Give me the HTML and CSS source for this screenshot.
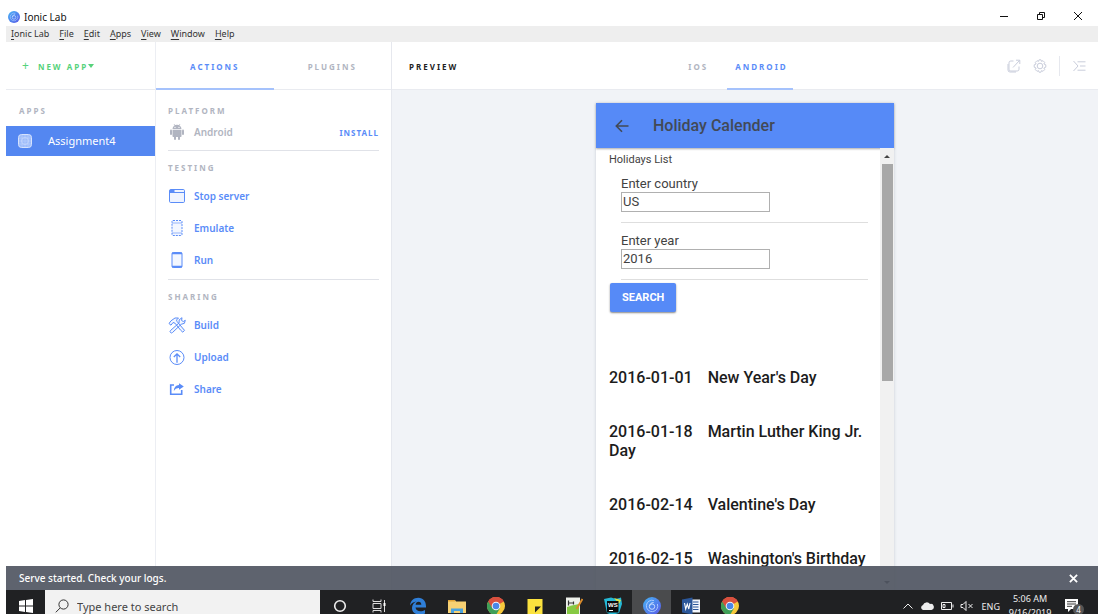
FILE: index.html
```html
<!DOCTYPE html>
<html lang="en">
<head>
<meta charset="utf-8">
<title>Ionic Lab</title>
<link rel="stylesheet" href="styles.css">
</head>
<body>
<svg class="defs" aria-hidden="true">
  <defs>
    <linearGradient id="lab-fill" x1="0" y1="0" x2="1" y2="1"><stop offset="0" stop-color="#46b4f5"/><stop offset="1" stop-color="#5a58e6"/></linearGradient>
    <symbol id="lab" viewBox="0 0 18 18">
      <circle cx="9" cy="9" r="9" fill="url(#lab-fill)"/>
      <path d="M11 3.6A5.7 5.7 0 1 0 14.4 7" fill="none" stroke="#a9c8ff" stroke-width="1"/>
      <circle cx="9" cy="9.6" r="2.7" fill="none" stroke="#c9dcff" stroke-width="1"/>
      <path d="M6.6 9C7 6.500 8.500 5.600 10.600 5.500" fill="none" stroke="#c9dcff" stroke-width="1"/>
    </symbol>
    <symbol id="chrome" viewBox="0 0 18 18">
      <circle cx="9" cy="9" r="9" fill="#f7c93c"/>
      <path d="M9 9 1.200 4.500A9 9 0 0 1 16.800 4.500Z" fill="#d9503f"/>
      <path d="M9 9 1.200 4.500A9 9 0 0 0 9 18l4-6.700Z" fill="#3f9f58"/>
      <path d="M9 4.700H17l-.2-.2A9 9 0 0 0 1.200 4.500L5.300 11.200Z" fill="#d9503f"/>
      <circle cx="9" cy="9" r="4.300" fill="#f4f6fa"/>
      <circle cx="9" cy="9" r="3.300" fill="#4a86e8"/>
    </symbol>
  </defs>
</svg>

<header class="titlebar">
  <svg class="titlebar-logo"><use href="#lab"/></svg>
  <h1 class="titlebar-name">Ionic Lab</h1>
  <div class="window-controls">
    <button aria-label="Minimize"><svg viewBox="0 0 10 10"><path d="M1 5.500h8"/></svg></button>
    <button aria-label="Restore"><svg viewBox="0 0 10 10"><path d="M1.500 3.500h5v5h-5zM3.500 3.200V1.500h5v5H6.800"/></svg></button>
    <button aria-label="Close"><svg viewBox="0 0 10 10"><path d="M1 1l8 8M9 1l-8 8"/></svg></button>
  </div>
</header>

<nav class="menubar">
  <button><u>I</u>onic Lab</button>
  <button><u>F</u>ile</button>
  <button><u>E</u>dit</button>
  <button><u>A</u>pps</button>
  <button><u>V</u>iew</button>
  <button><u>W</u>indow</button>
  <button><u>H</u>elp</button>
</nav>

<main class="workspace">
  <section class="apps">
    <div class="bar">
      <button class="new-app"><span class="plus">+</span>NEW APP<span class="caret"></span></button>
    </div>
    <h2 class="caption apps-caption">APPS</h2>
    <button class="app-item">
      <svg viewBox="0 0 14 14"><rect x=".5" y=".5" width="13" height="13" rx="3" fill="#9dbcfa" stroke="#d6e3fd"/><path d="M4 1v12M7 1v12M10 1v12M1 4h12M1 7h12M1 10h12" stroke="#b9cffb" stroke-width=".7"/><circle cx="7" cy="7" r="3.500" fill="none" stroke="#c9dafc" stroke-width=".7"/></svg>
      Assignment4
    </button>
  </section>

  <section class="actions">
    <div class="bar tabs">
      <button class="tab is-active">ACTIONS</button>
      <button class="tab">PLUGINS</button>
    </div>
    <div class="action-groups">
      <div class="group">
        <h2 class="caption">PLATFORM</h2>
        <div class="platform">
          <svg viewBox="0 0 18 18" fill="#b1b5c1"><path d="M4.500 6.200A4.500 4.500 0 0 1 13.500 6.200ZM4.500 7h9v6.200a.8.8 0 0 1-.8.8H5.300a.8.8 0 0 1-.8-.8Z"/><rect x="2" y="6.500" width="2" height="5.500" rx="1"/><rect x="14" y="6.500" width="2" height="5.500" rx="1"/><rect x="6" y="13" width="2" height="4" rx="1"/><rect x="10" y="13" width="2" height="4" rx="1"/><path d="M6 1l1.300 2M12 1l-1.300 2" stroke="#b1b5c1" stroke-width=".7"/><circle cx="7" cy="4.400" r=".6" fill="#fff"/><circle cx="11" cy="4.400" r=".6" fill="#fff"/></svg>
          <span>Android</span>
          <button class="install">INSTALL</button>
        </div>
      </div>
      <div class="group">
        <h2 class="caption">TESTING</h2>
        <button class="action"><svg viewBox="0 0 18 18"><rect x="1.500" y="2.500" width="15" height="13" rx="1.200" fill="#eff4ff"/><path d="M1.500 5.500h15"/><path d="M2 3h4v2H2z" fill="#5a8cf8"/></svg>Stop server</button>
        <button class="action"><svg viewBox="0 0 18 18"><rect x="4" y="1.500" width="10" height="15" rx="1" fill="#f3f7ff" stroke-dasharray="2 1"/><path d="M4 4h10M4 14h10" stroke-width=".6"/></svg>Emulate</button>
        <button class="action"><svg viewBox="0 0 18 18"><rect x="4" y="1.500" width="10" height="15" rx="1.200" fill="#f3f7ff"/><path d="M4 2.400h10M4 15.600h10" stroke-width="1.800"/></svg>Run</button>
      </div>
      <div class="group">
        <h2 class="caption">SHARING</h2>
        <button class="action"><svg viewBox="0 0 18 18"><path d="M1 7.500 3 4.800 7 2h3.500L8.500 4l.6 1.500L14.500 12l2 2.300-1.700 1.900-2.200-2L7 7.200 5 6.500 3 9.200ZM2.500 14.500 11 7l.2-3.200L14 1.700l-.4 2.800 1.700 1 2-1.200-.9 3-3.200 1L4.500 16.500a1.400 1.400 0 0 1-2-2Z" fill="#f3f7ff"/></svg>Build</button>
        <button class="action"><svg viewBox="0 0 18 18"><circle cx="9" cy="9.500" r="7"/><path d="M9 14.800V6M5.800 9 9 5.800 12.200 9" stroke-width="1.300"/></svg>Upload</button>
        <button class="action"><svg viewBox="0 0 18 18"><path d="M6 5H2.700v9.300h11V10" stroke-width="1.600"/><path d="M11 3.200 15.800 6.500 11 9.800V8Q7.600 7.700 5.800 11 6 5.600 11 5.100Z" fill="#5a8cf8" stroke="none"/></svg>Share</button>
      </div>
    </div>
  </section>

  <section class="preview">
    <div class="bar preview-bar">
      <h2 class="preview-title">PREVIEW</h2>
      <div class="tabs device-tabs">
        <button class="tab">IOS</button>
        <button class="tab is-active">ANDROID</button>
      </div>
      <div class="tools">
        <button aria-label="Open in browser"><svg viewBox="0 0 14 14"><path d="M6.500 2H3.800A1.800 1.800 0 0 0 2 3.800v6.400A1.800 1.800 0 0 0 3.800 12h6.400a1.800 1.800 0 0 0 1.800-1.800V7.500M1 5v6a2 2 0 0 0 2 2h6M6 8.500 12.600 1.400M9 1.200h3.800V5"/></svg></button>
        <button aria-label="Settings"><svg viewBox="0 0 14 14"><path d="M5.500 2.400 6 .8h2l.5 1.600 1.500-.7 1.700 1.700-.8 1.600 1.900.8v2.400l-1.900.8.8 1.600-1.700 1.700-1.500-.7L8 13.200H6l-.5-1.600-1.500.7-1.700-1.700.8-1.600-1.900-.8V5.800l1.900-.8-.8-1.600L4 1.700Z"/><circle cx="7" cy="7" r="2.800"/></svg></button>
        <span class="separator"></span>
        <button aria-label="Toggle logs"><svg viewBox="0 0 14 14"><path d="M1.500 2 6 7l-4.500 5M5.500 2.800h8M8 7h5.500M5.500 11.200h8"/></svg></button>
      </div>
    </div>

    <div class="stage">
      <div class="phone">
        <div class="phone-header">
          <button aria-label="Back"><svg viewBox="0 0 14 14"><path d="M13.500 7H1.500M7 1.200 1.300 7 7 12.800"/></svg></button>
          <h2>Holiday Calender</h2>
        </div>
        <div class="phone-view">
          <div class="phone-content">
            <h3 class="list-title">Holidays List</h3>
            <form class="search-form">
              <div class="field"><label for="country">Enter country</label><input id="country" type="text" value="US"></div>
              <div class="field"><label for="year">Enter year</label><input id="year" type="text" value="2016"></div>
            </form>
            <button class="search-button">SEARCH</button>
            <ul class="holidays">
              <li><time>2016-01-01</time>New Year's Day</li>
              <li><time>2016-01-18</time>Martin Luther King Jr. Day</li>
              <li><time>2016-02-14</time>Valentine's Day</li>
              <li><time>2016-02-15</time>Washington's Birthday</li>
            </ul>
          </div>
          <div class="scrollbar">
            <span class="arrow arrow-up"></span>
            <span class="track"><span class="thumb"></span></span>
            <span class="arrow arrow-down"></span>
          </div>
        </div>
      </div>
    </div>
  </section>

  <div class="toast" role="status">
    <span>Serve started. Check your logs.</span>
    <button aria-label="Dismiss"><svg viewBox="0 0 10 10"><path d="M1 1l8 8M9 1l-8 8"/></svg></button>
  </div>
</main>

<footer class="taskbar">
  <div class="taskbar-row">
    <button class="start" aria-label="Start"><svg viewBox="0 0 14 14" fill="#fff"><path d="M0 2l6-.9v5.400H0zM7 .9 14 0v6.500H7zM0 7.500h6v5.400L0 12zM7 7.500h7V14l-7-.9z"/></svg></button>
    <label class="task-search">
      <svg viewBox="0 0 14 14"><circle cx="8.500" cy="5.500" r="4.600"/><path d="M5.200 8.900.8 13.300"/></svg>
      <input type="text" placeholder="Type here to search" aria-label="Type here to search">
    </label>
    <div class="launchers">
      <button aria-label="Cortana"><svg viewBox="0 0 18 18"><circle cx="9" cy="9" r="5.300" fill="none" stroke="#eee" stroke-width="1.600"/></svg></button>
      <button aria-label="Task View"><svg viewBox="0 0 18 18"><path d="M3 2.500v2h8v-2M3 6.500h8v5H3zM3 15.500v-2h8v2M14.500 3v12" fill="none" stroke="#ddd"/><path d="M13.500 6h2v3h-2z" fill="#fff"/></svg></button>
      <button aria-label="Edge"><svg viewBox="0 0 18 18"><path d="M1 8.500C1.500 3.500 5 .8 9.300.8c5 0 7.700 3.700 7.700 8.400v1.400H6.500c.3 2.700 2.500 3.600 4.800 3.600 1.800 0 3.400-.5 4.700-1.300v3.500c-1.500.8-3.300 1.200-5.300 1.200C5.800 17.600 3 15 3 11c0-3 1.800-5.500 4.500-6.600C4.500 4.500 2.200 6.400 1 8.500ZM6.600 7.700h5.700c0-1.800-.9-3-2.800-3-1.600 0-2.600 1.200-2.900 3Z" fill="#2f7fd8"/></svg></button>
      <button aria-label="File Explorer"><svg viewBox="0 0 18 18"><path d="M0 3h7l1 1.500h10V16H0z" fill="#f7d173"/><path d="M0 3h7v1.500H0z" fill="#e3a437"/><path d="M3 16v-4.500h12V16h-3v-2H6v2z" fill="#4aa3df"/></svg></button>
      <button aria-label="Chrome"><svg><use href="#chrome"/></svg></button>
      <button aria-label="Sticky Notes"><svg viewBox="0 0 18 18"><path d="M1.500 2h15v15h-15z" fill="#fbe23e"/><path d="M9 9.500h6L9 15.500z" fill="#222"/></svg></button>
      <button aria-label="Notepad++"><svg viewBox="0 0 18 18"><path d="M1 .5h14v17H1z" fill="#eef1ec"/><path d="M2 10q6-2 12-3v10H2z" fill="#86c943"/><path d="M3.500 3.500v5M3.500 6h5M8.500 4.500v3" stroke="#333" stroke-width="1.200"/><path d="m17.500 2-6 10" stroke="#d98b2b" stroke-width="2"/></svg></button>
      <button aria-label="WebStorm"><svg viewBox="0 0 18 18"><path d="M0 2 7 .5l5 1.500 5-1.500L18 7l-3 9-7 2-5-2Z" fill="#24b9d6"/><path d="m10 1 7 2-2 4Z" fill="#d9e64c"/><path d="M3 4h11.500v11.500H3z" fill="#0b0b0b"/><text class="ws" x="4" y="10">WS</text><path d="M5 13.500h4" stroke="#fff"/></svg></button>
      <button class="is-open" aria-label="Ionic Lab"><svg><use href="#lab"/></svg></button>
      <button aria-label="Word"><svg viewBox="0 0 18 18"><path d="M9 2.500h9v13H9z" fill="#f3f6fb"/><path d="M11 5h5.500M11 7.500h5.500M11 10h5.500M11 12.500h5.500" stroke="#2b579a"/><path d="M0 2.500 10.500.5v17L0 15.500z" fill="#2b579a"/><path d="m2.500 6 1.200 6L5.300 7l1.500 5L8 6" fill="none" stroke="#fff" stroke-width="1.100"/></svg></button>
      <button aria-label="Chrome, second window"><svg><use href="#chrome"/></svg></button>
    </div>
    <div class="tray">
      <svg viewBox="0 0 12 12"><path d="m1.500 8.500 4.500-4.500 4.500 4.500"/></svg>
      <svg class="tray-wide" viewBox="0 0 14 12"><path d="M3 10a2.600 2.600 0 0 1 0-5 4 4 0 0 1 7-1 3 3 0 0 1 1.500 6Z" fill="#eee" stroke="none"/></svg>
      <svg class="tray-wide" viewBox="0 0 14 12"><path d="M1.500 2.500h10v7h-10zM13 4.500v3M3 4.500v3h2v-3z"/></svg>
      <svg class="tray-wide" viewBox="0 0 14 12"><path d="M1 4.500h2L6 1.500v9L3 7.500H1zM8.500 4l4 4M12.500 4l-4 4"/></svg>
      <span class="language">ENG</span>
      <div class="clock"><span>5:06 AM</span><span>9/16/2019</span></div>
      <button class="notifications" aria-label="4 notifications"><svg viewBox="0 0 16 16"><path d="M1 1h13v10H7l-3 3v-3H1z" fill="#fff"/><path d="M3 3.700h9M3 6h9M3 8.300h5" stroke="#222" stroke-width=".9"/></svg><span class="badge">4</span></button>
    </div>
  </div>
</footer>
</body>
</html>
```
FILE: styles.css
```css
* { box-sizing: border-box; }

body {
  margin: 0;
  padding: 0 4px 0 6px;
  height: 100vh;
  display: flex;
  flex-direction: column;
  overflow: hidden;
  background: #fff;
  color: #222;
  font-family: "Noto Sans", sans-serif;
  font-size: 10px;
}

h1, h2, h3, ul { margin: 0; padding: 0; font-weight: 400; }
ul { list-style: none; }
button { border: 0; padding: 0; background: none; color: inherit; font: inherit; letter-spacing: inherit; cursor: pointer; }
svg { display: block; flex: none; }
.defs { position: absolute; width: 0; height: 0; }

/* Window chrome */
.titlebar { display: flex; align-items: center; height: 26px; padding: 8px 0 0 2px; flex: none; }
.titlebar-logo { width: 12px; height: 12px; }
.titlebar-name { margin-left: 4px; font-size: 10px; color: #111; }
.window-controls { display: flex; gap: 27px; margin: 0 15px 2px auto; }
.window-controls svg { width: 10px; height: 10px; fill: none; stroke: #111; }

.menubar { display: flex; gap: 10px; align-items: center; height: 16px; padding: 0 5px; flex: none; background: #eee; color: #333; font-size: 9px; }
.menubar button { line-height: 14px; }
.menubar u { text-underline-offset: 2px; }

/* Workspace columns */
.workspace { position: relative; display: flex; flex: 1; min-height: 0; overflow: hidden; }
.bar { height: 48px; border-bottom: 1px solid #e9ebf0; flex: none; }
.apps { width: 150px; border-right: 1px solid #eceef3; flex: none; }
.actions { width: 236px; border-right: 1px solid #e6e8ee; flex: none; }
.preview { flex: 1; min-width: 0; display: flex; flex-direction: column; }

.caption { height: 14px; line-height: 14px; font-size: 8px; font-weight: 700; letter-spacing: 2px; color: #b1b5c1; }

.new-app { display: flex; align-items: center; height: 48px; padding-left: 16px; font-size: 8px; font-weight: 700; letter-spacing: 2px; color: #56d27b; }
.plus { margin-right: 7px; font-size: 12px; font-weight: 400; line-height: 12px; }
.caret { border: 3px solid transparent; border-top: 4px solid #56d27b; border-bottom: 0; }
.apps-caption { margin: 14px 0 8px 13px; }
.app-item { display: flex; align-items: center; gap: 16px; width: 100%; height: 30px; padding: 0 0 2px 12px; background: #5487f1; color: #fff; font-size: 11px; }
.app-item svg { width: 14px; height: 14px; margin-top: 2px; }

.tabs { display: flex; }
.tab { font-size: 8px; font-weight: 700; letter-spacing: 2px; color: #b1b5c1; }
.tab.is-active { color: #5a8cf8; box-shadow: inset 0 -2px #a5c2fc; }
.actions .tab { flex: 1; height: 48px; }

.action-groups { padding: 4px 12px 0; }
.group { padding: 10px 0 3px; border-bottom: 1px solid #e0e2e8; }
.group:last-child { border-bottom: 0; }
.group .caption { margin-bottom: 5px; }
.platform, .action { display: flex; align-items: center; gap: 8px; font-size: 10px; font-weight: 600; }
.platform { height: 18px; margin-bottom: 6px; color: #b1b5c1; }
.platform svg, .action svg { width: 18px; height: 18px; }
.action { width: 100%; height: 32px; color: #5a8cf8; }
.action svg { fill: none; stroke: #5a8cf8; }
.install { margin-left: auto; font-size: 8px; font-weight: 700; letter-spacing: 1px; color: #5a8cf8; }

.preview-bar { display: grid; grid-template-columns: 1fr auto 1fr; align-items: center; padding: 0 12px 0 17px; }
.preview-title { font-size: 8px; font-weight: 700; letter-spacing: 2px; color: #222; }
.device-tabs { gap: 14px; margin-right: 22px; }
.device-tabs .tab { height: 48px; padding: 0 5px 0 8px; }
.tools { display: flex; align-items: center; justify-content: flex-end; gap: 12px; }
.tools svg { width: 14px; height: 14px; fill: none; stroke: #c9cddb; }
.separator { width: 1px; height: 20px; background: #e6e8ee; }

.stage { flex: 1; min-height: 0; display: flex; justify-content: center; padding-top: 13px; background: #f1f3f7; }

/* Phone preview */
.phone { display: flex; flex-direction: column; width: 298px; background: #fff; box-shadow: 0 0 3px #c9ccd4; font-family: Roboto, sans-serif; color: #424242; }
.phone-header { display: flex; align-items: center; gap: 24px; height: 45px; padding-left: 19px; flex: none; background: #568af7; box-shadow: 0 1px 2px #aaa; }
.phone-header h2 { font-size: 16px; font-weight: 500; color: #424956; }
.phone-header svg { width: 14px; height: 14px; fill: none; stroke: #424956; stroke-width: 1.600; }
.phone-view { flex: 1; min-height: 0; display: flex; }
.phone-content { flex: 1; min-width: 0; padding: 4px 12px 0 13px; overflow: hidden; }
.list-title { font-size: 11px; line-height: 16px; }
.search-form { padding-left: 12px; }
.field { padding: 9px 0 10px; border-bottom: 1px solid #dedede; }
.field label { display: block; font-size: 13px; line-height: 17px; }
.field:first-child { padding-top: 7px; }
.field input { display: block; width: 149px; height: 20px; padding: 0 1px 2px; border: 1px solid #b0b0b0; background: #fff; color: #424242; font-family: inherit; font-size: 13px; }
.search-button { display: block; height: 29px; margin: 3px 0 0 1px; padding: 0 12px; border-radius: 2px; background: #568af7; box-shadow: 0 1px 2px #888; color: #fff; font-size: 11px; font-weight: 700; }
.holidays { display: grid; gap: 35px; margin-top: 56px; color: #1c1c1c; font-size: 16px; font-weight: 500; line-height: 19px; }
.holidays time { margin-right: 15px; }

.scrollbar { display: flex; flex-direction: column; width: 14px; background: #f1f1f1; }
.arrow { display: flex; align-items: center; justify-content: center; height: 16px; }
.arrow::before { content: ""; border: 3px solid transparent; }
.arrow-up::before { border-bottom-color: #444; border-top: 0; }
.arrow-down::before { border-top-color: #444; border-bottom: 0; }
.track { flex: 1; padding: 0 1px 0 2px; }
.thumb { display: block; height: 53%; background: #a8a8a8; }

.toast { position: absolute; inset: auto 0 0; display: flex; align-items: center; justify-content: space-between; height: 24px; padding: 0 20px 0 13px; background: rgba(78, 83, 96, 0.91); color: #fff; font-size: 10px; font-weight: 500; }
.toast svg { width: 9px; height: 9px; stroke: #fff; stroke-width: 2; }

/* Taskbar */
.taskbar { height: 24px; flex: none; overflow: hidden; background: #202123; color: #eee; }
.taskbar-row { display: flex; height: 32px; }
.start { display: flex; align-items: center; justify-content: center; width: 39px; flex: none; }
.start svg { width: 14px; height: 14px; }
.task-search { display: flex; align-items: center; gap: 8px; width: 275px; padding-left: 10px; background: #f2f2f2; }
.task-search svg { width: 14px; height: 14px; fill: none; stroke: #333; }
.task-search input { flex: 1; min-width: 0; padding: 0; border: 0; background: none; font: 11px "Noto Sans", sans-serif; }
.task-search input::placeholder { color: #444; opacity: 1; }
.launchers { display: flex; }
.launchers button { display: flex; align-items: center; justify-content: center; width: 39px; }
.launchers svg { width: 18px; height: 18px; }
.launchers .is-open { background: #4a4b4d; }
.ws { fill: #fff; font: bold 6px "Liberation Sans", sans-serif; }
.tray { display: flex; align-items: center; gap: 6px; margin-left: auto; padding-right: 18px; font-size: 9px; }
.tray > svg { width: 12px; height: 12px; fill: none; stroke: #eee; }
.tray > .tray-wide { width: 14px; }
.language { margin-left: 2px; }
.clock { display: flex; flex-direction: column; width: 44px; margin-left: 4px; text-align: center; line-height: 14px; }
.tray > .clock { margin-left: 2px; }
.notifications { position: relative; margin-left: 6px; }
.notifications svg { width: 16px; height: 16px; }
.badge { position: absolute; top: 6px; left: 9px; width: 11px; height: 11px; border-radius: 50%; background: #555; color: #fff; font-size: 8px; line-height: 11px; text-align: center; }
```
